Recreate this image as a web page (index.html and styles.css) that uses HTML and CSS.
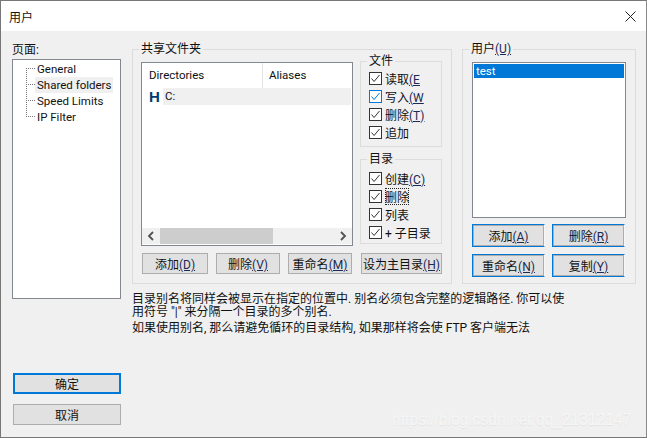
FILE: index.html
```html
<!DOCTYPE html>
<html lang="zh">
<head>
<meta charset="utf-8">
<title>用户</title>
<link rel="stylesheet" href="styles.css">
</head>
<body>
<div class="window">
  <header class="titlebar">
    <span class="title">用户</span>
    <svg class="close" viewBox="0 0 11 11"><path d="M.5.5l10 10M10.5.5l-10 10"/></svg>
  </header>
  <main class="content">
    <aside class="sidebar">
      <div class="pages-label">页面:</div>
      <div class="tree">
        <div class="tree-lines"></div>
        <div class="tree-item"><span>General</span></div>
        <div class="tree-item"><span class="tree-sel">Shared folders</span></div>
        <div class="tree-item"><span>Speed Limits</span></div>
        <div class="tree-item"><span>IP Filter</span></div>
      </div>
      <div class="side-spacer"></div>
      <button class="btn ok">确定</button>
      <button class="btn cancel">取消</button>
    </aside>
    <section class="center">
      <div class="top-groups">
        <fieldset class="group shared">
          <legend>共享文件夹</legend>
          <div class="shared-main">
            <div class="shared-left">
              <div class="listview">
                <div class="lv-head">
                  <div class="lv-col1">Directories</div>
                  <div class="lv-col2">Aliases</div>
                </div>
                <div class="lv-row">
                  <span class="home">H</span>
                  <span class="lv-cell">C:</span>
                </div>
                <div class="lv-fill"></div>
                <div class="hscroll">
                  <svg class="arrow" viewBox="0 0 8 10"><path d="M6 1L2 5l4 4"/></svg>
                  <div class="track"><div class="thumb"></div></div>
                  <svg class="arrow" viewBox="0 0 8 10"><path d="M2 1l4 4-4 4"/></svg>
                </div>
              </div>
            </div>
            <div class="shared-right">
              <fieldset class="group small files">
                <legend>文件</legend>
                <label class="check"><span class="box"><svg viewBox="0 0 11 11"><path d="M1.5 5.5l2.6 3 5.4-6.5"/></svg></span><span>读取<span class="mn">(E</span></span></label>
                <label class="check hot"><span class="box"><svg viewBox="0 0 11 11"><path d="M1.5 5.5l2.6 3 5.4-6.5"/></svg></span><span>写入<span class="mn">(W</span></span></label>
                <label class="check"><span class="box"><svg viewBox="0 0 11 11"><path d="M1.5 5.5l2.6 3 5.4-6.5"/></svg></span><span>删除<span class="mn">(T)</span></span></label>
                <label class="check"><span class="box"><svg viewBox="0 0 11 11"><path d="M1.5 5.5l2.6 3 5.4-6.5"/></svg></span><span>追加</span></label>
              </fieldset>
              <fieldset class="group small dirs">
                <legend>目录</legend>
                <label class="check"><span class="box"><svg viewBox="0 0 11 11"><path d="M1.5 5.5l2.6 3 5.4-6.5"/></svg></span><span>创建<span class="mn">(C)</span></span></label>
                <label class="check"><span class="box"><svg viewBox="0 0 11 11"><path d="M1.5 5.5l2.6 3 5.4-6.5"/></svg></span><span class="focus">删除</span></label>
                <label class="check"><span class="box"><svg viewBox="0 0 11 11"><path d="M1.5 5.5l2.6 3 5.4-6.5"/></svg></span><span>列表</span></label>
                <label class="check"><span class="box"><svg viewBox="0 0 11 11"><path d="M1.5 5.5l2.6 3 5.4-6.5"/></svg></span><span>+ 子目录</span></label>
              </fieldset>
            </div>
          </div>
          <div class="shared-buttons">
            <button class="btn b-add">添加<span class="mn">(D)</span></button>
            <button class="btn b-del">删除<span class="mn">(V)</span></button>
            <button class="btn b-ren">重命名<span class="mn">(M)</span></button>
            <button class="btn b-home">设为主目录<span class="mn">(H)</span></button>
          </div>
        </fieldset>
        <fieldset class="group users">
          <legend>用户<span class="mn">(U)</span></legend>
          <div class="userlist"><div class="user-sel">test</div></div>
          <div class="user-buttons">
            <button class="btn blue">添加<span class="mn">(A)</span></button>
            <button class="btn blue">删除<span class="mn">(R)</span></button>
            <button class="btn blue">重命名<span class="mn">(N)</span></button>
            <button class="btn blue">复制<span class="mn">(Y)</span></button>
          </div>
        </fieldset>
      </div>
      <div class="notes">
        <p>目录别名将同样会被显示在指定的位置中. 别名必须包含完整的逻辑路径. 你可以使<br>用符号 "|" 来分隔一个目录的多个别名.</p>
        <p>如果使用别名, 那么请避免循环的目录结构, 如果那样将会使 FTP 客户端无法</p>
      </div>
    </section>
  </main>
  <div class="watermark">https://blog.csdn.net/qq_21312147</div>
</div>
</body>
</html>
```
FILE: styles.css
```css
* { box-sizing: border-box; }
html, body { margin: 0; padding: 0; }
body {
  width: 647px;
  height: 438px;
  overflow: hidden;
  background: #f0f0f0;
  font-family: Roboto, "Noto Sans CJK SC", sans-serif;
  font-size: 12px;
  color: #111;
}
.window {
  position: relative;
  width: 647px;
  height: 438px;
  border: 1px solid #777;
  border-right-color: #888;
  display: flex;
  flex-direction: column;
  background: #f0f0f0;
}
.titlebar {
  height: 30px;
  flex: none;
  background: #fff;
  display: flex;
  align-items: center;
  justify-content: space-between;
  padding: 0 10px 0 8px;
}
.title { font-size: 12px; }
.close { width: 11px; height: 11px; fill: none; stroke: #222; stroke-width: 1; }
.content {
  flex: 1;
  display: flex;
  padding: 10px 10px 12px 11px;
  gap: 11px;
}
.sidebar { width: 109px; flex: none; display: flex; flex-direction: column; }
.pages-label { height: 18px; line-height: 18px; font-size: 12px; }
.tree {
  position: relative;
  height: 240px;
  background: #fff;
  border: 1px solid #828790;
  padding: 1px 0 0 22px;
}
.tree-lines {
  position: absolute;
  left: 13px;
  top: 8px;
  width: 10px;
  height: 49px;
  border-left: 1px dotted #777;
  background-image: repeating-linear-gradient(180deg, #777 0 1px, transparent 1px 16px);
  -webkit-mask-image: repeating-linear-gradient(90deg, #000 0 1px, transparent 1px 2px);
}
.tree-item { height: 16px; line-height: 16px; font-size: 11.5px; white-space: nowrap; }
.tree-item span { display: inline-block; padding: 0 2px; height: 16px; }
.tree-sel { background: #f0f0f0; }
.side-spacer { flex: 1; }
.btn {
  font-family: inherit;
  font-size: 12px;
  color: #111;
  background: #e1e1e1;
  border: 1px solid #adadad;
  padding: 0;
  margin: 0;
  white-space: nowrap;
  display: block;
}
.ok { height: 21px; border: 2px solid #0078d7; margin-left: 1px; width: 108px; }
.cancel { height: 21px; margin-top: 10px; margin-left: 1px; width: 108px; }
.mn { color: #1a2a55; text-decoration: underline; text-underline-offset: 1px; }
.center { width: 504px; flex: none; display: flex; flex-direction: column; }
.top-groups { display: flex; gap: 10px; height: 243px; }
.group {
  margin: 0;
  padding: 0;
  min-width: 0;
  border: 1px solid #dcdcdc;
}
.group legend {
  padding: 0 2px;
  margin-left: -2px;
  font-size: 12px;
  line-height: 16px;
  white-space: nowrap;
}
.shared { width: 320px; height: 243px; padding: 0 0 0 8px; }
.shared-main { display: flex; gap: 7px; height: 184px; margin-top: 5px; }
.shared-left { width: 212px; }
.listview {
  width: 212px;
  height: 184px;
  border: 1px solid #828790;
  background: #fff;
  display: flex;
  flex-direction: column;
}
.lv-head { display: flex; height: 25px; flex: none; font-size: 11.5px; line-height: 25px; }
.lv-col1 { width: 121px; padding-left: 7px; border-right: 1px solid #e5e5e5; }
.lv-col2 { padding-left: 6px; }
.lv-row { display: flex; height: 17px; flex: none; line-height: 17px; font-size: 11.5px; }
.home { width: 21px; padding-left: 7px; font-weight: 700; font-size: 15px; color: #003c6e; font-family: "Liberation Sans", sans-serif; }
.lv-cell { width: 188px; padding-left: 2px; background: #f0f0f0; }
.lv-fill { flex: 1; }
.hscroll { height: 16px; flex: none; display: flex; align-items: center; margin-bottom: 1px; background: #f0f0f0; }
.arrow { width: 18px; height: 10px; fill: none; stroke: #505050; stroke-width: 1.8; flex: none; }
.track { flex: 1; height: 16px; }
.thumb { width: 113px; height: 16px; background: #cdcdcd; }
.shared-right { width: 82px; display: flex; flex-direction: column; gap: 5px; margin-top: -1px; }
.small { padding: 0 0 0 8px; width: 82px; }
.small legend { margin-left: -2px; padding: 0 2px; line-height: 14px; }
.files { height: 93px; margin-top: -7px; padding-top: 1px; }
.dirs { height: 92px; padding-top: 3px; }
.check { display: flex; align-items: center; height: 18px; gap: 3px; font-size: 12px; white-space: nowrap; overflow: hidden; }
.box {
  width: 13px;
  height: 13px;
  border: 1px solid #333;
  background: #fff;
  display: block;
  flex: none;
  padding: 0;
}
.box svg { display: block; width: 11px; height: 11px; fill: none; stroke: #333; stroke-width: 1; }
.hot .box { border-color: #0078d7; }
.hot .box svg { stroke: #0078d7; }
.focus { outline: 1px dotted #222; outline-offset: -1px; }
.shared-buttons { display: flex; margin-top: 7px; height: 21px; margin-left: 1px; }
.shared-buttons .btn { height: 21px; }
.b-add { width: 66px; }
.b-del { width: 64px; margin-left: 8px; }
.b-ren { width: 64px; margin-left: 8px; }
.b-home { width: 81px; margin-left: 9px; }
.users { width: 174px; height: 243px; padding: 0 0 0 9px; }
.users legend { margin-left: -3px; }
.userlist { width: 154px; height: 156px; margin-top: 5px; border: 1px solid #828790; background: #fff; padding: 1px; }
.user-sel { height: 14px; line-height: 14px; background: #0078d7; color: #fff; font-size: 11.5px; padding-left: 2px; }
.user-buttons { display: grid; grid-template-columns: 73px 73px; gap: 7px 7px; margin-top: 6px; }
.blue {
  height: 23px;
  border: 1px solid #0078d7;
  border-right-color: #f7f7f7;
  box-shadow: inset 0 0 0 1px #adadad;
}
.notes { padding-top: 9px; font-size: 12px; line-height: 13px; }
.notes p { margin: 0 0 3px; white-space: nowrap; }
.watermark {
  position: absolute;
  left: 391px;
  top: 410px;
  font-family: "Liberation Sans", sans-serif;
  font-size: 15.6px;
  color: #f6f6f6;
  text-shadow: 0 1px 1px #e2e2e2;
  white-space: nowrap;
}
```
